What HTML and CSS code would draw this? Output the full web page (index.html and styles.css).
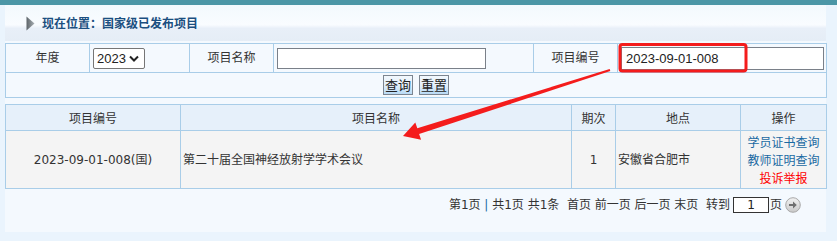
FILE: index.html
```html
<!DOCTYPE html>
<html lang="zh-CN">
<head>
    <meta charset="UTF-8">
    <title>国家级已发布项目</title>
    <link rel="stylesheet" href="styles.css">
</head>
<body>
    <div class="top-bar"></div>
    <div class="main">
        <div class="position-bar">
            <svg class="pos-icon" width="9" height="15" viewBox="0 0 9 15">
                <defs>
                    <linearGradient id="tri" x1="0" y1="0" x2="1" y2="0">
                        <stop offset="0" stop-color="#5d6469"/>
                        <stop offset="1" stop-color="#a9b0b5"/>
                    </linearGradient>
                </defs>
                <polygon points="0.5,0.5 8.5,7.5 0.5,14.5" fill="url(#tri)"/>
            </svg>
            <span class="pos-text">现在位置：国家级已发布项目</span>
        </div>

        <table class="search">
            <colgroup>
                <col style="width:84px">
                <col style="width:100px">
                <col style="width:84px">
                <col style="width:260px">
                <col style="width:84px">
                <col style="width:209px">
            </colgroup>
            <tr class="search-row">
                <td class="label">年度</td>
                <td>
                    <span class="select-box">
                        <select class="year">
                            <option>2023</option>
                        </select>
                        <svg width="10" height="7" viewBox="0 0 10 7"><polyline points="1,1.5 5,5.5 9,1.5" fill="none" stroke="#222" stroke-width="2"/></svg>
                    </span>
                </td>
                <td class="label">项目名称</td>
                <td><input type="text" class="field name-field"></td>
                <td class="label">项目编号</td>
                <td><input type="text" class="field code-field" value="2023-09-01-008"></td>
            </tr>
            <tr class="button-row">
                <td colspan="6">
                    <button class="btn">查询</button>
                    <button class="btn">重置</button>
                </td>
            </tr>
        </table>

        <table class="list">
            <colgroup>
                <col style="width:175px">
                <col style="width:391px">
                <col style="width:44px">
                <col style="width:125px">
                <col style="width:86px">
            </colgroup>
            <tr class="list-head">
                <th>项目编号</th>
                <th>项目名称</th>
                <th>期次</th>
                <th>地点</th>
                <th>操作</th>
            </tr>
            <tr class="list-row">
                <td class="center">2023-09-01-008(国)</td>
                <td>第二十届全国神经放射学学术会议</td>
                <td class="center">1</td>
                <td>安徽省合肥市</td>
                <td class="center ops">
                    <a href="#">学员证书查询</a><br>
                    <a href="#">教师证明查询</a><br>
                    <a href="#" class="report">投诉举报</a>
                </td>
            </tr>
        </table>

        <div class="pager">
            <span>第1页 <span class="sep">|</span> 共1页 共1条&nbsp; 首页 前一页 后一页 末页&nbsp; 转到</span>
            <input type="text" class="page-input" value="1">
            <span>页</span>
            <svg class="go" width="16" height="16" viewBox="0 0 16 16">
                <defs>
                    <linearGradient id="goBg" x1="0" y1="0" x2="0" y2="1">
                        <stop offset="0" stop-color="#f2f2f2"/>
                        <stop offset="1" stop-color="#c9c9c9"/>
                    </linearGradient>
                </defs>
                <circle cx="8" cy="8" r="7.3" fill="url(#goBg)" stroke="#a9a9a9"/>
                <path d="M4 7h4V4.5L11.8 8 8 11.5V9H4z" fill="#6f6f6f"/>
            </svg>
        </div>
    </div>
    <div class="bottom-strip"></div>

    <!-- annotation drawn over the screenshot -->
    <svg class="marks" width="837" height="241" viewBox="0 0 837 241">
        <rect x="620" y="44.5" width="126" height="26.5" rx="2.5" fill="none" stroke="#f41c1c" stroke-width="3"/>
        <polygon fill="#f41c1c" points="403,136 415.3,122.5 417.3,128.2 609.7,68.9 610.3,71.1 419.1,134 421.1,139.7"/>
    </svg>
</body>
</html>
```

FILE: styles.css
```css
body {
    margin: 0;
    background-color: #eaf4fd;
    font-family: "DejaVu Sans", "Noto Sans CJK SC", sans-serif;
    font-size: 12px;
    color: #333;
    position: relative;
    height: 241px;
    overflow: hidden;
}

.top-bar {
    height: 5px;
    background-color: #4b96a6;
}

.main {
    margin: 0 11px 0 5px;
    height: 227px;
    background-color: #f4f9fe;
}

.position-bar {
    height: 36px;
    display: flex;
    align-items: center;
    padding-left: 21px;
    background: linear-gradient(#f3f9fd 0, #f9fcff 55%, #e8eff8 65%, #e5edf6 100%);
}

.pos-icon {
    margin-right: 7px;
}

.pos-text {
    font-family: "Noto Sans CJK SC", sans-serif;
    font-weight: bold;
    color: #1b4f80;
    line-height: 16px;
}

table {
    border-collapse: collapse;
    table-layout: fixed;
    width: 821px;
}

td, th {
    border: 1px solid #a9cde8;
    padding: 0 2px;
    line-height: 16px;
}

.search {
    margin-top: 2px;
    background-color: #f4f9fe;
}

.search-row td {
    height: 28px;
}

.search .label {
    text-align: center;
}

.select-box {
    display: inline-flex;
    align-items: center;
    margin-left: 1px;
    width: 50px;
    height: 19px;
    border: 1px solid #767676;
    border-radius: 2px;
    background-color: #fff;
    vertical-align: middle;
}

.year {
    appearance: none;
    -webkit-appearance: none;
    border: none;
    background: transparent;
    font-family: "Liberation Sans", sans-serif;
    font-size: 13px;
    color: #222;
    padding: 0 0 0 3px;
    width: 35px;
    outline: none;
}

.field {
    box-sizing: border-box;
    height: 21px;
    border: 1px solid #7a8089;
    background-color: #fff;
    font-family: "Liberation Sans", sans-serif;
    font-size: 13px;
    color: #222;
    padding: 0 4px;
    vertical-align: middle;
}

.name-field {
    width: 209px;
    margin-left: 1px;
}

.code-field {
    width: 203px;
    margin-left: 1px;
    height: 23px;
}

.button-row td {
    height: 24px;
    text-align: center;
}

.btn {
    font-family: "Noto Sans CJK SC", sans-serif;
    font-size: 13px;
    line-height: 16px;
    color: #222;
    padding: 1px 1px;
    border: 1px solid #7c8590;
    background: linear-gradient(#f2f8fd 0, #e4f0fb 50%, #b8daf5 100%);
    margin: 0 1px;
    height: 20px;
}

.list {
    margin-top: 6px;
}

.list-head th {
    height: 25px;
    font-weight: normal;
    background-color: #e6f0fa;
    font-family: "Noto Sans CJK SC", sans-serif;
}

.list-row td {
    height: 57px;
    background-color: #f4f4f4;
}

.center {
    text-align: center;
}

.ops {
    line-height: 18px;
    font-family: "Noto Sans CJK SC", sans-serif;
}

.ops a {
    color: #1a69a2;
    text-decoration: none;
}

.ops a.report {
    color: #ff0000;
}

.pager {
    display: flex;
    justify-content: flex-end;
    align-items: center;
    padding: 8px 25px 0 0;
    white-space: pre;
    line-height: 16px;
}

.sep {
    color: #1a69a2;
}

.page-input {
    box-sizing: border-box;
    width: 36px;
    height: 16px;
    margin: 0 1px 0 3px;
    border: 1px solid #333;
    padding: 0;
    text-align: center;
    font-family: "DejaVu Sans", sans-serif;
    font-size: 12px;
    color: #222;
}

.go {
    margin-left: 3px;
}

.marks {
    position: absolute;
    left: 0;
    top: 0;
    pointer-events: none;
}
```
